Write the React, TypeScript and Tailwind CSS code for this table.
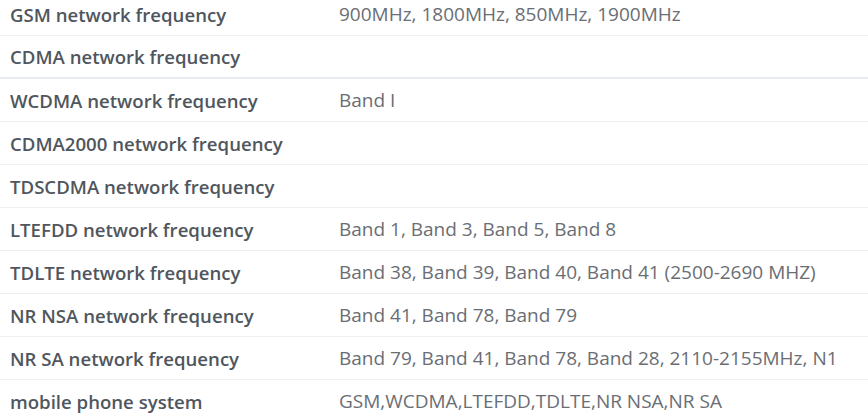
const rows: { label: string; value: string; thick?: boolean }[] = [
  { label: "GSM network frequency", value: "900MHz, 1800MHz, 850MHz, 1900MHz" },
  { label: "CDMA network frequency", value: "", thick: true },
  { label: "WCDMA network frequency", value: "Band I" },
  { label: "CDMA2000 network frequency", value: "" },
  { label: "TDSCDMA network frequency", value: "" },
  { label: "LTEFDD network frequency", value: "Band 1, Band 3, Band 5, Band 8" },
  { label: "TDLTE network frequency", value: "Band 38, Band 39, Band 40, Band 41 (2500-2690 MHZ)" },
  { label: "NR NSA network frequency", value: "Band 41, Band 78, Band 79" },
  { label: "NR SA network frequency", value: "Band 79, Band 41, Band 78, Band 28, 2110-2155MHz, N1" },
  { label: "mobile phone system", value: "GSM,WCDMA,LTEFDD,TDLTE,NR NSA,NR SA" },
];

export default function App() {
  return (
    <div className="w-[868px] h-[420px] overflow-hidden bg-white font-['Open_Sans',sans-serif]">
      <div className="-mt-[7px]">
        {rows.map((r) => (
          <div
            key={r.label}
            className={
              r.thick
                ? "flex items-center h-[43px] border-b-2 border-[#e8ecf2]"
                : "flex items-center h-[43px] border-b border-[#eef0f3]"
            }
          >
            <div className="w-[339px] pl-[10px] pt-[1px] text-[18.6px] font-semibold text-[#50565d] whitespace-nowrap">{r.label}</div>
            <div className="flex-1 pt-[1px] text-[19px] text-[#6a6e74] whitespace-nowrap">{r.value}</div>
          </div>
        ))}
      </div>
    </div>
  );
}
